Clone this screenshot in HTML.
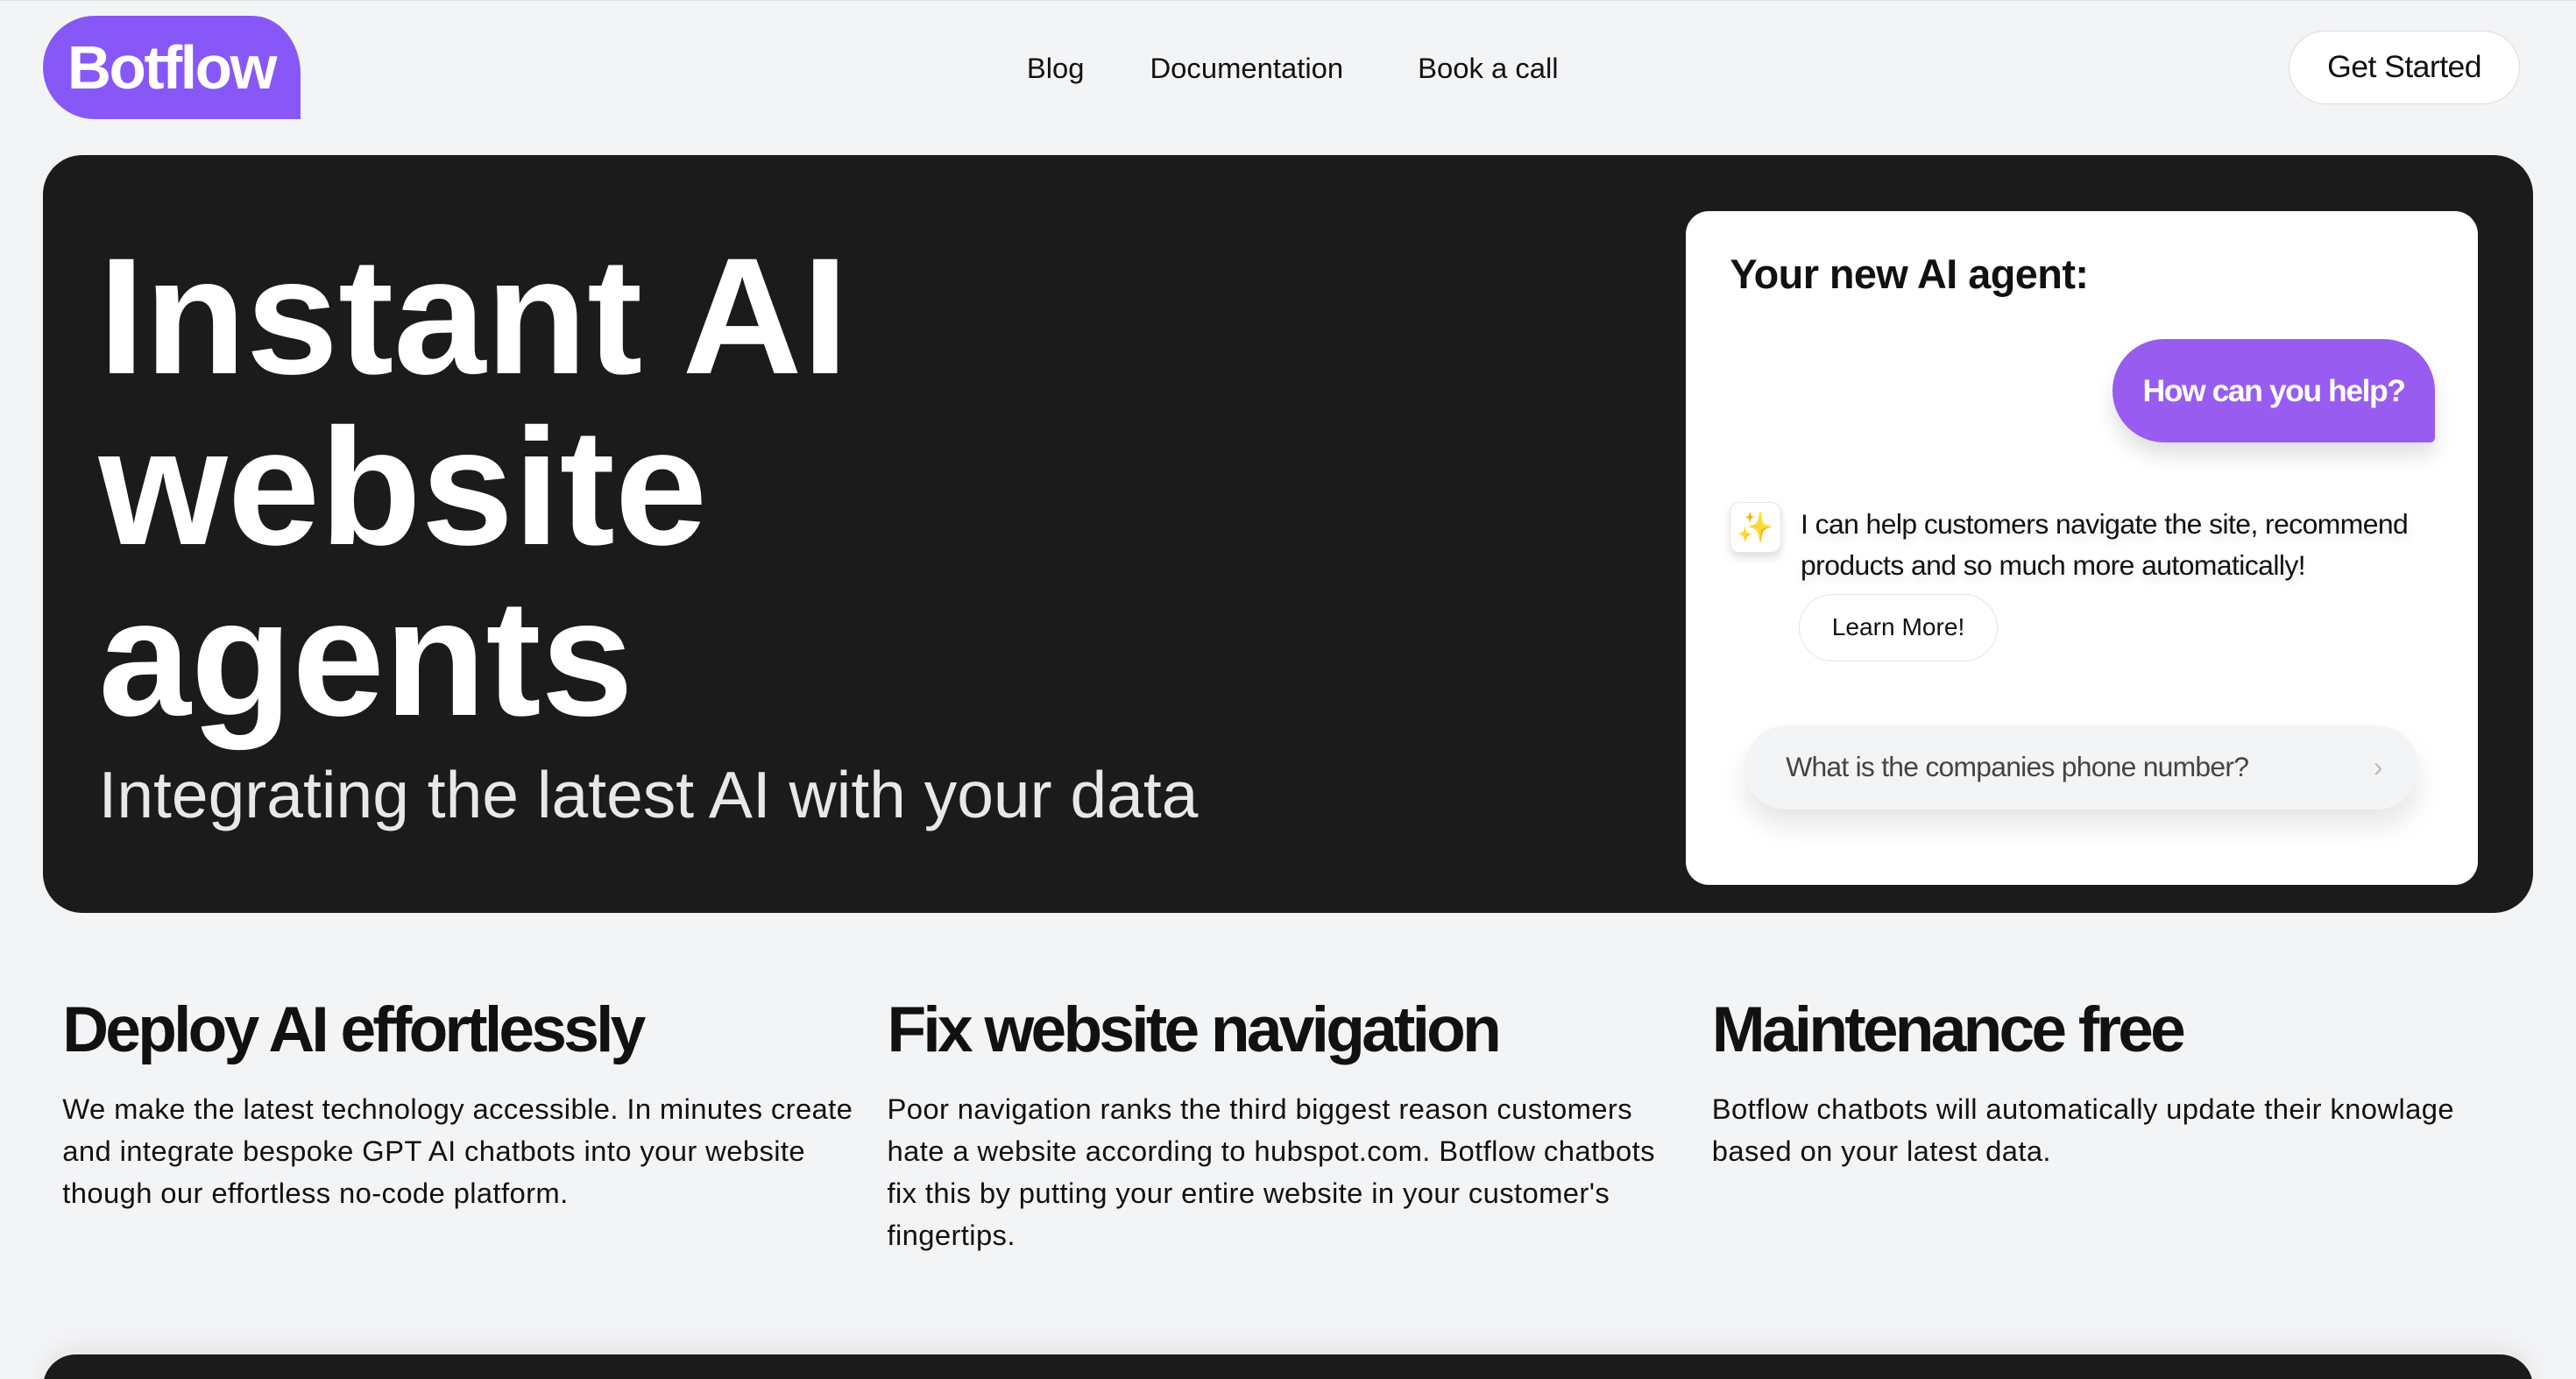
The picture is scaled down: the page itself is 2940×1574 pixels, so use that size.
<!DOCTYPE html>
<html><head><meta charset="utf-8"><style>
*{margin:0;padding:0;box-sizing:border-box}
html,body{width:2940px;height:1574px;overflow:hidden;background:#f3f4f6}
#r{zoom:1.875;width:1568px;height:839.5px;position:relative;font-family:"Liberation Sans",sans-serif;color:#111;border-top:1px solid #e2e3e6}
.a{position:absolute}
.logo{left:26px;top:9px;width:157px;height:63px;background:#8758f7;border-radius:32px 30px 0 32px/32px 36px 0 32px;color:#fff;font-weight:bold;font-size:37px;letter-spacing:-1.3px;padding:10px 0 0 15px}
.nav{top:31px;font-size:17.5px;letter-spacing:0}
.btn{left:1393px;top:18px;width:141px;height:45px;border:1px solid #ddd;border-radius:23px;background:#fff;font-size:19px;text-align:center;line-height:43px;letter-spacing:-.3px}
.hero{left:26px;top:94px;width:1516px;height:461px;background:#1b1b1b;border-radius:24px}
.h1{left:60px;top:140px;color:#fff;font-size:101px;font-weight:bold;line-height:104px;letter-spacing:0}
.sub{left:60px;top:460px;color:#e8e8e8;font-size:40px;letter-spacing:0}
.card{left:1026px;top:128px;width:482px;height:410px;background:#fff;border-radius:14px}
.ct{left:27px;top:24px;font-size:25px;font-weight:bold;letter-spacing:-.3px}
.bub{left:260px;top:78px;width:196px;height:63px;background:#985cf0;border-radius:32px 32px 3px 32px;color:#fff;font-size:19px;font-weight:bold;letter-spacing:-.8px;line-height:63px;text-align:center;box-shadow:0 8px 12px rgba(0,0,0,.12)}
.ico{left:27px;top:177px;width:31px;height:31px;border:1px solid #e5e5e5;border-radius:6px;box-shadow:0 3px 5px rgba(0,0,0,.12);font-size:18px;text-align:center;line-height:30px;color:#f4c542}
.msg{left:70px;top:178px;width:390px;font-size:17px;line-height:25px;letter-spacing:-.3px;text-shadow:0 3px 6px rgba(0,0,0,.12)}
.lm{left:69px;top:233px;width:121px;height:41px;border:1px solid #e3e3e3;border-radius:21px;font-size:15px;text-align:center;line-height:39px}
.inp{left:36px;top:313px;width:410px;height:51px;background:#f3f4f6;border-radius:26px;box-shadow:0 10px 16px rgba(0,0,0,.1);font-size:17px;color:#444;line-height:51px;padding-left:25px;letter-spacing:-.4px}
.inp span{position:absolute;right:22px;color:#bbb}
.f h2{font-size:39px;letter-spacing:-2px;font-weight:bold;line-height:44px}
.f p{margin-top:13px;font-size:17.5px;line-height:25.5px;letter-spacing:.2px}
.f{top:605px;width:492px}
.bot{left:26px;top:824px;width:1516px;height:40px;background:#1b1b1b;border-radius:24px;box-shadow:0 -6px 14px rgba(0,0,0,.06)}
</style></head><body><div id="r">
<div class="a logo">Botflow</div>
<div class="a nav" style="left:625px">Blog</div>
<div class="a nav" style="left:700px">Documentation</div>
<div class="a nav" style="left:863px">Book a call</div>
<div class="a btn">Get Started</div>
<div class="a hero"></div>
<div class="a h1">Instant AI<br>website<br>agents</div>
<div class="a sub">Integrating the latest AI with your data</div>
<div class="a card">
<div class="a ct">Your new AI agent:</div>
<div class="a bub">How can you help?</div>
<div class="a ico">✨</div>
<div class="a msg">I can help customers navigate the site, recommend products and so much more automatically!</div>
<div class="a lm">Learn More!</div>
<div class="a inp">What is the companies phone number?<span>›</span></div>
</div>
<div class="a f" style="left:38px"><h2>Deploy AI effortlessly</h2><p>We make the latest technology accessible. In minutes create and integrate bespoke GPT AI chatbots into your website though our effortless no-code platform.</p></div>
<div class="a f" style="left:540px;width:478px"><h2>Fix website navigation</h2><p>Poor navigation ranks the third biggest reason customers hate a website according to hubspot.com. Botflow chatbots fix this by putting your entire website in your customer's fingertips.</p></div>
<div class="a f" style="left:1042px"><h2>Maintenance free</h2><p>Botflow chatbots will automatically update their knowlage based on your latest data.</p></div>
<div class="a bot"></div>
</div></body></html>
